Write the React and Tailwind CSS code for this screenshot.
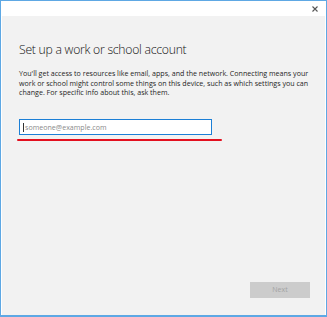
export default function App() {
  return (
    <div className="w-[327px] h-[317px] border border-b-2 border-[#5ea8e4] bg-white flex flex-col font-['Open_Sans',sans-serif]">
      <div className="h-[15px] shrink-0 flex justify-end items-center pr-[8px]">
        <svg width="6" height="6" viewBox="0 0 6 6">
          <path d="M0.5 0.5 L5.5 5.5 M5.5 0.5 L0.5 5.5" stroke="#555" strokeWidth="1.1" />
        </svg>
      </div>
      <div className="flex-1 ml-[1px] mr-[1px] bg-[#f2f2f2] flex flex-col pl-[17px]">
        <h1 className="mt-[26px] h-[16px] text-[12.2px] leading-[16px] font-light tracking-[-0.25px] text-[#111] whitespace-nowrap">
          Set up a work or school account
        </h1>
        <p className="mt-[11px] text-[7.1px] leading-[9.7px] text-[#1e1e1e] whitespace-nowrap">
          You'll get access to resources like email, apps, and the network. Connecting means your
          <br />
          work or school might control some things on this device, such as which settings you can
          <br />
          change. For specific info about this, ask them.
        </p>
        <div className="mt-[21px] w-[193px] h-[16px] border-[1.5px] border-[#1c7fd6] bg-white flex items-center pl-[3px] gap-[1px]">
          <span className="w-px h-[9px] bg-[#333]" />
          <span className="text-[7.1px] leading-[10px] text-[#8a8a8a]">someone@example.com</span>
        </div>
        <div className="mt-[4px] -ml-[2px] w-[205px] h-[2px] bg-[#e3101f] rounded-full" />
        <div className="flex-1" />
        <div className="flex justify-end pr-[15px] mb-[17px]">
          <div className="w-[60px] h-[16px] bg-[#cccccc] flex items-center justify-center text-[7px] text-[#a3a3a3]">
            Next
          </div>
        </div>
      </div>
    </div>
  );
}
